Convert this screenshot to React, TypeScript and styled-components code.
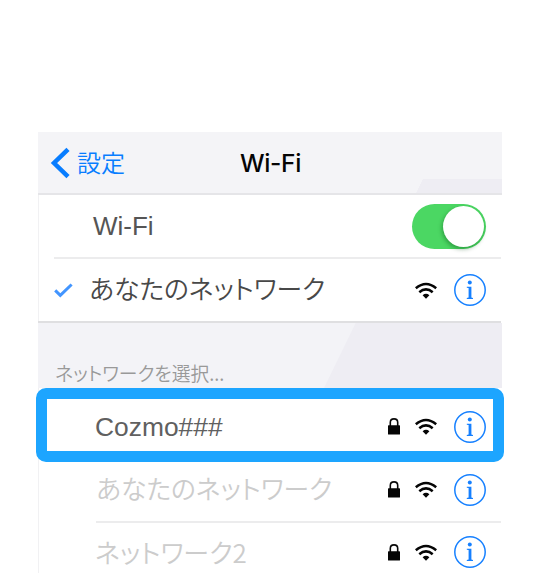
import React from 'react';
import styled, { createGlobalStyle } from 'styled-components';

const GlobalStyle = createGlobalStyle`
  * { box-sizing: border-box; }
  html, body { margin: 0; background: #fff; overflow: hidden; }
  body { font-family: "Liberation Sans", "Noto Sans CJK JP", sans-serif; }
`;

const Page = styled.main`
  width: 542px;
  height: 573px;
  padding: 132px 40px 0 38px;
  overflow: hidden;
  background: #fff;
`;

const Screen = styled.section`
  width: 464px;
  height: 441px;
  display: flex;
  flex-direction: column;
  box-shadow: inset 1px 0 #f1f1f3;
`;

const NavBar = styled.header`
  height: 63px;
  flex: none;
  display: grid;
  grid-template-columns: 1fr auto 1fr;
  align-items: center;
  padding: 0 11px 0 12px;
  border-bottom: 2px solid #e5e5e8;
  background:
    linear-gradient(116deg, transparent 6px, #eeedf3 6.5px) right bottom / 86px 14px no-repeat,
    #f4f4f7;
`;

const BackButton = styled.button`
  display: flex;
  align-items: center;
  gap: 7px;
  padding: 0;
  border: 0;
  background: none;
  color: #087dff;
`;

const Text = styled.span<{ $size: number; $color?: string; $weight?: number; $latin?: boolean; $lift?: number }>`
  font-family: ${p => (p.$latin ? '"Liberation Sans", sans-serif' : '"Noto Sans CJK JP", sans-serif')};
  font-size: ${p => p.$size}px;
  font-weight: ${p => p.$weight ?? 350};
  font-feature-settings: ${p => (p.$latin ? 'normal' : '"palt"')};
  line-height: 30px;
  padding-bottom: ${p => p.$lift ?? 0}px;
  color: ${p => p.$color ?? 'inherit'};
  white-space: nowrap;
`;

const Title = styled.h1`
  margin: 0;
  font: 500 24.5px/30px Inter, sans-serif;
  letter-spacing: -0.3px;
  color: #050505;
  text-align: center;
`;

const Row = styled.div<{ $height: number; $right?: number; $lift?: number }>`
  height: ${p => p.$height}px;
  flex: none;
  display: flex;
  align-items: center;
  padding-right: ${p => p.$right ?? 16}px;
  padding-bottom: ${p => p.$lift ?? 0}px;
`;

const Leading = styled.div<{ $width: number }>`
  width: ${p => p.$width}px;
  flex: none;
  display: flex;
  padding-left: 16px;
`;

const Divider = styled.div<{ $inset: number; $color?: string }>`
  height: 2px;
  flex: none;
  margin: 0 1px 0 ${p => p.$inset}px;
  background: ${p => p.$color ?? '#ececed'};
`;

const Switch = styled.div`
  width: 74px;
  height: 45px;
  margin-left: auto;
  padding: 2px;
  display: flex;
  justify-content: flex-end;
  border-radius: 23px;
  background: #4bd763;
`;

const Knob = styled.div`
  width: 41px;
  height: 41px;
  border-radius: 50%;
  background: #fff;
  box-shadow: -1px 2px 4px rgba(0, 70, 15, 0.4);
`;

const SectionHeader = styled.div`
  height: 65px;
  flex: none;
  padding: 35px 0 0 17px;
  background: linear-gradient(116deg, #f3f3f7 285px, #eeedf3 286px);
`;

const Highlight = styled.div`
  height: 74px;
  flex: none;
  margin: 0 -2px;
  border: 11px solid #1da5ff;
  border-radius: 10px;
  background: linear-gradient(#fff, #fff) padding-box, #1da5ff;
`;

const Actions = styled.div`
  margin-left: auto;
  display: flex;
  align-items: center;
`;

const Icon = styled.svg<{ $gap?: number }>`
  display: block;
  flex: none;
  margin-right: ${p => p.$gap ?? 0}px;
`;

const NetworkActions = ({ locked = false }: { locked?: boolean }) => (
  <Actions>
    {locked && (
      <Icon width="12" height="17" viewBox="0 0 12 17" $gap={15}>
        <path d="M2.3 8V4.4C2.3 2.2 3.8.9 6 .9s3.7 1.3 3.7 3.5V8" fill="none" stroke="#080808" strokeWidth="1.6" />
        <rect y="7.2" width="12" height="9.4" rx=".6" fill="#050505" />
      </Icon>
    )}
    <Icon width="22" height="17" viewBox="0 0 22 17" $gap={17}>
      <g fill="none" stroke="#050505" strokeWidth="2.6">
        <path d="M.8 6.2Q11-2.2 21.2 6.2" />
        <path d="M4.3 10.2Q11 4.6 17.7 10.2" />
      </g>
      <path d="M7.6 13.2Q11 10.4 14.4 13.2L11 16.7Z" fill="#050505" />
    </Icon>
    <Icon width="32" height="32" viewBox="0 0 32 32">
      <circle cx="16" cy="16" r="15.2" fill="none" stroke="#1680ff" strokeWidth="1.5" />
      <circle cx="15.8" cy="8.5" r="2" fill="#1680ff" />
      <path d="M12.8 12.8h4.6v10.6l1.6.6v.9h-6.2V24l1.8-.6V14.1l-1.8-.3Z" fill="#1680ff" />
    </Icon>
  </Actions>
);

export default function App() {
  return (
    <>
      <GlobalStyle />
      <Page>
        <Screen>
          <NavBar>
            <BackButton>
              <Icon width="20" height="32" viewBox="0 0 20 32">
                <path d="M18 2.4 4 16l14 13.6" fill="none" stroke="#087dff" strokeWidth="4.5" />
              </Icon>
              <Text $size={24} $lift={2}>設定</Text>
            </BackButton>
            <Title>Wi-Fi</Title>
          </NavBar>
          <Row $height={62}>
            <Leading $width={55} />
            <Text $latin $size={26} $weight={400} $color="#555">Wi-Fi</Text>
            <Switch><Knob /></Switch>
          </Row>
          <Divider $inset={16} />
          <Row $height={62}>
            <Leading $width={51}>
              <Icon width="19" height="15" viewBox="0 0 19 15">
                <path d="M1.2 7.4 6.3 12.3 17.6 1.5" fill="none" stroke="#4295ff" strokeWidth="3" />
              </Icon>
            </Leading>
            <Text $size={25.8} $color="#484848" $lift={4}>あなたのネットワーク</Text>
            <NetworkActions />
          </Row>
          <Divider $inset={0} $color="#dfdfe1" />
          <SectionHeader>
            <Text $size={18.8} $color="#999">ネットワークを選択...</Text>
          </SectionHeader>
          <Highlight>
            <Row $height={55} $right={7}>
              <Leading $width={48} />
              <Text $latin $size={26.4} $weight={400} $color="#606060">Cozmo###</Text>
              <NetworkActions locked />
            </Row>
          </Highlight>
          <Row $height={59} $lift={4}>
            <Leading $width={58} />
            <Text $size={25.8} $color="#ccc" $lift={3}>あなたのネットワーク</Text>
            <NetworkActions locked />
          </Row>
          <Divider $inset={58} />
          <Row $height={59} $lift={1}>
            <Leading $width={57} />
            <Text $size={26} $color="#ccc" $lift={1}>ネットワーク2</Text>
            <NetworkActions locked />
          </Row>
        </Screen>
      </Page>
    </>
  );
}
